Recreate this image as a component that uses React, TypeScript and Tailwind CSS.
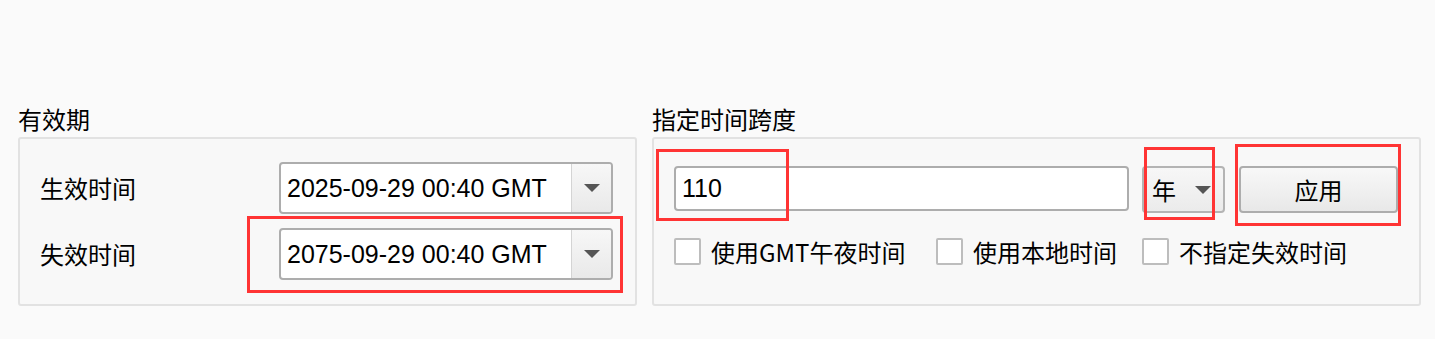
import { FC } from "react";

const Arrow: FC = () => (
  <svg width="16" height="8" viewBox="0 0 16 8" className="block">
    <path d="M0 0 L16 0 L8 8 Z" fill="#555555" />
  </svg>
);

const DateCombo: FC<{ value: string }> = ({ value }) => (
  <div className="flex h-[52px] w-[334px] overflow-hidden rounded-[4px] border-2 border-[#adadad] bg-white">
    <div className="flex flex-1 items-center pl-[6px] font-['Liberation_Sans',sans-serif] text-[25px] leading-none">
      {value}
    </div>
    <div className="flex w-[40px] items-center justify-center border-l border-[#d4d4d4] bg-gradient-to-b from-[#f7f7f7] to-[#e9e9e9]">
      <Arrow />
    </div>
  </div>
);

const Check: FC<{ label: string; className?: string }> = ({ label, className }) => (
  <label className={`flex items-center gap-[10px] ${className ?? ""}`}>
    <span className="block h-[27px] w-[27px] rounded-[2px] border-2 border-[#bdbdbd] bg-white" />
    <span className="leading-none">{label}</span>
  </label>
);

const GroupTitle: FC<{ children: string }> = ({ children }) => (
  <div className="h-[33px] leading-[30px]">{children}</div>
);

export default function App() {
  return (
    <div className="relative h-[339px] w-[1435px] bg-[#fafafa] font-['Noto_Sans_CJK_SC',sans-serif] text-[24px] text-black">
      <div className="flex gap-[15px] pl-[18px] pr-[14px] pt-[104px]">
        {/* 有效期 */}
        <section className="w-[619px]">
          <GroupTitle>有效期</GroupTitle>
          <div className="flex h-[169px] flex-col gap-[14px] rounded-[3px] border-2 border-[#e2e2e2] bg-[#f8f8f8] pl-[20px] pr-[22px] pt-[23px]">
            <div className="flex items-center justify-between">
              <span>生效时间</span>
              <DateCombo value="2025-09-29 00:40 GMT" />
            </div>
            <div className="flex items-center justify-between">
              <span>失效时间</span>
              <DateCombo value="2075-09-29 00:40 GMT" />
            </div>
          </div>
        </section>

        {/* 指定时间跨度 */}
        <section className="flex-1">
          <GroupTitle>指定时间跨度</GroupTitle>
          <div className="flex h-[169px] flex-col rounded-[3px] border-2 border-[#e2e2e2] bg-[#f8f8f8] pl-[20px] pr-[21px] pt-[27px]">
            <div className="flex items-start gap-[13px]">
              <div className="flex h-[45px] w-[455px] items-center rounded-[4px] border-2 border-[#adadad] bg-white pl-[6px] font-['Liberation_Sans',sans-serif] text-[25px] leading-none">
                110
              </div>
              <div className="flex h-[47px] w-[83px] items-center justify-between rounded-[4px] border-2 border-[#b4b4b4] bg-gradient-to-b from-[#f7f7f7] to-[#ebebeb] pl-[8px] pr-[12px] leading-none">
                <span>年</span>
                <Arrow />
              </div>
              <button
                type="button"
                className="ml-px flex h-[47px] w-[159px] items-center justify-center rounded-[4px] border-2 border-[#adadad] bg-gradient-to-b from-[#f8f8f8] to-[#e8e8e8] leading-none"
              >
                应用
              </button>
            </div>
            <div className="mt-[25px] flex items-center">
              <Check label="使用GMT午夜时间" className="w-[262px]" />
              <Check label="使用本地时间" className="w-[206px]" />
              <Check label="不指定失效时间" />
            </div>
          </div>
        </section>
      </div>

      {/* annotation frames */}
      <div className="pointer-events-none absolute left-[247px] top-[216px] h-[77px] w-[376px] border-[3px] border-[#ff3434]" />
      <div className="pointer-events-none absolute left-[656px] top-[149px] h-[72px] w-[133px] border-[3px] border-[#ff3434]" />
      <div className="pointer-events-none absolute left-[1144px] top-[147px] h-[73px] w-[71px] border-[3px] border-[#ff3434]" />
      <div className="pointer-events-none absolute left-[1235px] top-[144px] h-[82px] w-[166px] border-[3px] border-[#ff3434]" />
    </div>
  );
}
